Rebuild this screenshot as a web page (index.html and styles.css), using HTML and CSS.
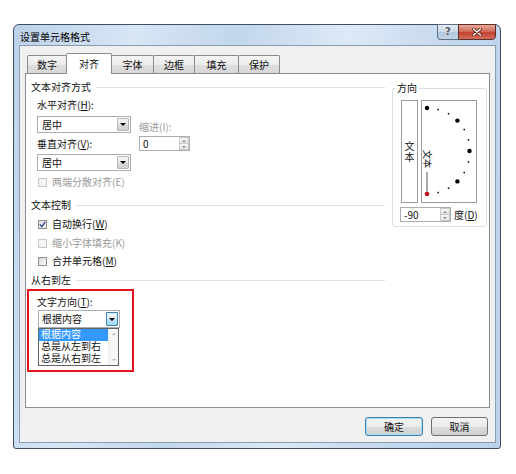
FILE: index.html
```html
<!DOCTYPE html>
<html lang="zh-CN">
<head>
<meta charset="utf-8">
<title>设置单元格格式</title>
<link rel="stylesheet" href="styles.css">
</head>
<body>
<div class="window">
  <div class="titlebar">
    <div class="title">设置单元格格式</div>
    <div class="caption-buttons">
      <div class="cap-btn help">?</div>
      <div class="cap-btn close">
        <svg width="10" height="8" viewBox="0 0 10 8"><path d="M1.5 1 L8.5 7 M8.5 1 L1.5 7" stroke="#5a1d14" stroke-width="3" stroke-linecap="round"/><path d="M1.5 1 L8.5 7 M8.5 1 L1.5 7" stroke="#ffffff" stroke-width="1.6" stroke-linecap="round"/></svg>
      </div>
    </div>
  </div>
  <div class="client">
    <div class="tabs">
      <div class="tab w40">数字</div>
      <div class="tab active w46">对齐</div>
      <div class="tab w43">字体</div>
      <div class="tab w42">边框</div>
      <div class="tab w45">填充</div>
      <div class="tab w42">保护</div>
    </div>
    <div class="panel">
      <div class="left-col">
        <div class="section-head"><span>文本对齐方式</span><div class="rule"></div></div>
        <div class="indent">
          <div class="label first">水平对齐(<u>H</u>):</div>
          <div class="align-row">
            <div class="align-left">
              <div class="combo">
                <div class="combo-text">居中</div>
                <div class="combo-btn"><span class="arrow"></span></div>
              </div>
              <div class="label gap5">垂直对齐(<u>V</u>):</div>
              <div class="combo gap4">
                <div class="combo-text">居中</div>
                <div class="combo-btn"><span class="arrow"></span></div>
              </div>
            </div>
            <div class="indent-box">
              <div class="label disabled">缩进(I):</div>
              <div class="spin spin-indent">
                <div class="spin-val">0</div>
                <div class="spin-btns"><div class="spin-up"><span class="tri-up"></span></div><div class="spin-down"><span class="tri-down"></span></div></div>
              </div>
            </div>
          </div>
          <div class="check disabled mt5"><span class="box"></span><span>两端分散对齐(E)</span></div>
        </div>

        <div class="section-head mt11"><span>文本控制</span><div class="rule"></div></div>
        <div class="indent">
          <div class="check mt7"><span class="box"><svg width="7" height="7" viewBox="0 0 7 7"><path d="M0.8 3.4 L2.8 5.6 L6.3 0.9" fill="none" stroke="#32478a" stroke-width="1.4"/></svg></span><span>自动换行(<u>W</u>)</span></div>
          <div class="check disabled mt7"><span class="box"></span><span>缩小字体填充(K)</span></div>
          <div class="check mt6"><span class="box"></span><span>合并单元格(<u>M</u>)</span></div>
        </div>

        <div class="section-head mt7"><span>从右到左</span><div class="rule"></div></div>
        <div class="redbox">
          <div class="label">文字方向(<u>T</u>):</div>
          <div class="combo combo-dir">
            <div class="combo-text">根据内容</div>
            <div class="combo-btn focused"><span class="arrow"></span></div>
          </div>
          <div class="dd-list">
            <div class="dd-items">
              <div class="dd-item sel">根据内容</div>
              <div class="dd-item">总是从左到右</div>
              <div class="dd-item">总是从右到左</div>
            </div>
            <div class="dd-scroll"><span class="tri-up light"></span><span class="tri-down light"></span></div>
          </div>
        </div>
      </div>

      <fieldset class="orient">
        <legend>方向</legend>
        <div class="orient-row">
          <div class="vtext-box"><span class="vtext">文本</span></div>
          <div class="dial">
            <svg width="54" height="101" viewBox="0 0 54 101">
              <g fill="#000">
                <circle cx="5" cy="7" r="2.2"/>
                <rect x="15.4" y="7.8" width="1.5" height="1.5"/>
                <rect x="25.8" y="12" width="1.5" height="1.5"/>
                <circle cx="35.4" cy="19.6" r="2.2"/>
                <rect x="41.5" y="27.8" width="1.5" height="1.5"/>
                <rect x="45.8" y="38.1" width="1.5" height="1.5"/>
                <circle cx="47.5" cy="50" r="2.2"/>
                <rect x="45.8" y="60.4" width="1.5" height="1.5"/>
                <rect x="41.5" y="70.8" width="1.5" height="1.5"/>
                <circle cx="35.4" cy="80.4" r="2.2"/>
                <rect x="25.8" y="86.5" width="1.5" height="1.5"/>
                <rect x="15.4" y="90.8" width="1.5" height="1.5"/>
              </g>
              <text x="5" y="49" transform="rotate(90 5 49)" font-size="9" dominant-baseline="central" font-family="Noto Sans CJK SC, sans-serif" fill="#000">文本</text>
              <line x1="5" y1="71" x2="5" y2="91" stroke="#707070" stroke-width="1.2"/>
              <circle cx="5" cy="93" r="2.3" fill="#c0101a"/>
            </svg>
          </div>
        </div>
        <div class="spin-row">
          <div class="spin">
            <div class="spin-val">-90</div>
            <div class="spin-btns"><div class="spin-up"><span class="tri-up"></span></div><div class="spin-down"><span class="tri-down"></span></div></div>
          </div>
          <span class="deg">度(<u>D</u>)</span>
        </div>
      </fieldset>
    </div>
    <div class="buttons">
      <div class="btn default">确定</div>
      <div class="btn cancel">取消</div>
    </div>
  </div>
</div>
</body>
</html>
```

FILE: styles.css
```css
* { box-sizing: border-box; }
html, body { margin: 0; padding: 0; background: #fff; }
body {
  font-family: "Noto Sans CJK SC", "Microsoft YaHei", sans-serif;
  font-size: 10px;
  line-height: 12px;
  color: #111;
}
u { text-decoration: underline; text-underline-offset: 1px; }

.window {
  margin: 24px 0 0 13px;
  width: 488px;
  height: 425px;
  border: 1px solid #3f4e62;
  border-radius: 6px 6px 3px 3px;
  padding: 0 4px 5px 5px;
  background: linear-gradient(100deg, #bcd2ea 0%, #d8e6f5 22%, #c2d6ec 40%, #dde9f6 60%, #c3d7ed 80%, #bcd1ea 100%);
  display: flex;
  flex-direction: column;
}
.titlebar {
  height: 20px;
  display: flex;
  justify-content: space-between;
  align-items: flex-start;
}
.title { margin: 6px 0 0 1px; color: #000; }
.caption-buttons { display: flex; margin-top: -1px; }
.cap-btn {
  height: 16px;
  display: flex;
  align-items: center;
  justify-content: center;
}
.help {
  width: 21px;
  border: 1px solid #5d6e85;
  border-right: none;
  border-radius: 0 0 0 4px;
  background: linear-gradient(#e6edf5, #c9d6e6 48%, #b3c5da 52%, #c4d4e6);
  color: #4a5668;
  font-family: "DejaVu Sans", sans-serif;
  font-size: 10px;
  font-weight: bold;
  text-shadow: 0 0 2px #fff;
}
.close {
  width: 38px;
  border: 1px solid #5a2f2a;
  border-radius: 0 0 4px 0;
  background: linear-gradient(#e8a897, #d26c5a 45%, #c2412e 55%, #d0705d);
}

.client {
  flex: 1;
  border: 1px solid #8a9cb3;
  background: #f0f0f0;
  padding: 7px 0 6px 0;
  display: flex;
  flex-direction: column;
}
.tabs {
  height: 20px;
  display: flex;
  align-items: flex-end;
  padding-left: 7px;
}
.tab {
  height: 18px;
  border: 1px solid #898c95;
  border-bottom: none;
  margin-left: -1px;
  background: linear-gradient(#f5f5f5, #ececec 50%, #dedede 51%, #d8d8d8);
  text-align: center;
  line-height: 17px;
  border-radius: 2px 2px 0 0;
}
.tab:first-child { margin-left: 0; }
.tab.active {
  height: 21px;
  margin-bottom: -1px;
  background: #fff;
  line-height: 19px;
  position: relative;
  z-index: 1;
}
.w40 { width: 40px; }
.w42 { width: 42px; }
.w43 { width: 43px; }
.w45 { width: 45px; }
.w46 { width: 46px; }

.panel {
  height: 335px;
  margin: 0 5px;
  border: 1px solid #898c95;
  background: #fff;
  display: flex;
  align-items: flex-start;
  gap: 7px;
  padding: 7px 2px 0 4px;
}
.left-col { width: 355px; }
.section-head {
  display: flex;
  align-items: center;
  height: 12px;
  padding-left: 1px;
}
.rule { flex: 1; height: 1px; background: #dbe1e6; margin-left: 5px; }
.indent { padding-left: 7px; }
.label { height: 12px; white-space: nowrap; }
.label.first { margin-top: 6px; }
.disabled { color: #9a9a9a; }
.gap5 { margin-top: 5px; }
.gap4 { margin-top: 4px; }
.mt5 { margin-top: 5px; }
.mt6 { margin-top: 6px; }
.mt7 { margin-top: 7px; }
.mt11 { margin-top: 11px; }

.align-row { display: flex; gap: 8px; margin-top: 5px; }
.align-left { width: 94px; }
.combo {
  height: 17px;
  border: 1px solid #abadb3;
  background: #fff;
  display: flex;
}
.combo-text { flex: 1; padding-left: 4px; line-height: 15px; }
.combo-btn {
  width: 12px;
  margin: 1px;
  border: 1px solid #b5b5b5;
  border-radius: 1px;
  background: linear-gradient(#f4f4f4, #e9e9e9 50%, #dadada 51%, #d2d2d2);
  display: flex;
  align-items: center;
  justify-content: center;
}
.combo-btn.focused {
  border-color: #3c7fb1;
  background: linear-gradient(#eaf6fd, #d9f0fc 50%, #bee6fd 51%, #a7d9f5);
}
.arrow {
  width: 0; height: 0;
  border-left: 3px solid transparent;
  border-right: 3px solid transparent;
  border-top: 3px solid #000;
}
.indent-box { margin-top: 5px; }
.spin {
  width: 51px;
  height: 15px;
  border: 1px solid #abadb3;
  background: #fff;
  display: flex;
}
.spin-indent { margin-top: 3px; }
.spin-val { flex: 1; padding-left: 3px; line-height: 13px; }
.spin-btns { width: 10px; display: flex; flex-direction: column; }
.spin-up, .spin-down {
  flex: 1;
  border: 1px solid #c9c9c9;
  background: linear-gradient(#f6f6f6, #e4e4e4);
  display: flex;
  align-items: center;
  justify-content: center;
}
.spin-down { border-top: none; }
.tri-up, .tri-down {
  width: 0; height: 0;
  border-left: 2px solid transparent;
  border-right: 2px solid transparent;
}
.tri-up { border-bottom: 2px solid #8a8a8a; }
.tri-down { border-top: 2px solid #8a8a8a; }
.tri-up.light { border-bottom-color: #b5b5b5; }
.tri-down.light { border-top-color: #b5b5b5; }

.check { display: flex; align-items: center; height: 12px; padding-left: 1px; }
.box {
  width: 9px; height: 9px;
  border: 1px solid #8e8f8f;
  background: linear-gradient(135deg, #dcdcdc, #f8f8f8);
  margin-right: 5px;
  display: flex;
  align-items: center;
  justify-content: center;
}
.check.disabled .box { border-color: #c8c8c8; background: #f4f4f4; }

.redbox {
  margin: 3px 0 0 -3px;
  width: 107px;
  height: 83px;
  border: 2px solid #e3121c;
  padding: 5px 0 0 8px;
}
.combo-dir { width: 82px; height: 18px; margin: 2px 0 0 1px; }
.combo-dir .combo-text { line-height: 16px; padding-left: 3px; }
.dd-list {
  width: 81px;
  height: 38px;
  margin-left: 1px;
  border: 1px solid #646464;
  background: #fff;
  display: flex;
}
.dd-items { flex: 1; }
.dd-item {
  height: 12px;
  line-height: 12px;
  padding-left: 2px;
  white-space: nowrap;
  font-family: "Liberation Sans", "Noto Sans CJK SC", sans-serif;
}
.dd-item.sel { background: #3399ff; color: #fff; }
.dd-scroll {
  width: 10px;
  background: #f7f7f7;
  border-left: 1px solid #ececec;
  display: flex;
  flex-direction: column;
  align-items: center;
  justify-content: space-between;
  padding: 4px 0;
}

.orient {
  width: 95px;
  margin: 1px 0 0 0;
  padding: 0 0 4px 2px;
  border: 1px solid #d5dfe5;
  border-radius: 3px;
  min-width: 0;
}
.orient legend { padding: 0 2px; line-height: 12px; }
.orient-row { display: flex; gap: 3px; margin-left: 6px; margin-top: 6px; }
.vtext-box {
  width: 17px;
  height: 103px;
  border: 1px solid #9a9a9a;
  display: flex;
  align-items: center;
  justify-content: center;
}
.vtext { writing-mode: vertical-rl; text-orientation: upright; line-height: 11px; font-size: 10px; letter-spacing: 1px; }
.dial { width: 56px; height: 103px; border: 1px solid #9a9a9a; }
.spin-row { display: flex; align-items: center; margin: 4px 0 0 5px; }
.deg { margin-left: 3px; }

.buttons {
  display: flex;
  justify-content: flex-end;
  gap: 8px;
  margin-top: 9px;
  padding-right: 7px;
}
.btn {
  height: 19px;
  border: 1px solid #707070;
  border-radius: 3px;
  background: linear-gradient(#f2f2f2, #ebebeb 50%, #dddddd 51%, #cfcfcf);
  text-align: center;
  line-height: 17px;
}
.btn.default {
  width: 58px;
  border-color: #3c7fb1;
  box-shadow: inset 0 0 0 1px #a7dcf7;
}
.btn.cancel { width: 57px; }
```
